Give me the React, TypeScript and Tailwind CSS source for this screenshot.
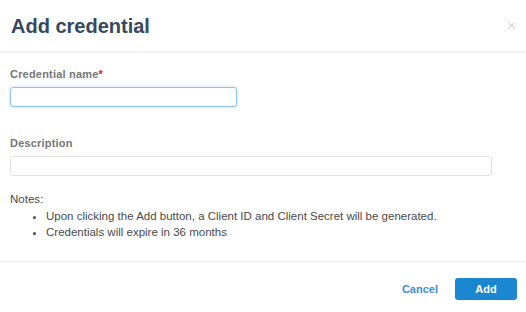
import { X } from "lucide-react";

export default function App() {
  return (
    <div className="w-[526px] h-[312px] bg-white flex flex-col font-['Liberation_Sans',Arial,sans-serif]">
      <div className="h-[53px] flex items-center justify-between pl-[11px] pr-[9px] border-b-2 border-[#f2f2f2]">
        <h2 className="text-[20px] font-bold text-[#34495e] leading-none">Add credential</h2>
        <X className="w-[11px] h-[11px] text-[#c4c4c4]" strokeWidth={2} />
      </div>

      <div className="flex-1 px-[10px] pt-[14px]">
        <label className="block text-[11px] leading-[14px] font-bold text-[#767676] tracking-[0.2px]">
          Credential name<span className="text-[#e02424]">*</span>
        </label>
        <input
          type="text"
          className="mt-[6px] block w-[227px] h-[20px] rounded-[3px] border border-[#8fc2ef] shadow-[0_0_3px_rgba(90,160,235,0.45)] outline-none"
        />

        <label className="mt-[29px] block text-[11px] leading-[14px] font-bold text-[#767676] tracking-[0.2px]">
          Description
        </label>
        <input
          type="text"
          className="mt-[6px] block w-[482px] h-[20px] rounded-[3px] border border-[#e2e2e2] outline-none"
        />

        <div className="mt-[15px] text-[11.5px] leading-[16.5px] text-[#4a4a4a]">
          <p>Notes:</p>
          <ul className="list-disc pl-[36px]">
            <li>Upon clicking the Add button, a Client ID and Client Secret will be generated.</li>
            <li>Credentials will expire in 36 months</li>
          </ul>
        </div>
      </div>

      <div className="h-[51px] border-t border-[#eeeeee] flex items-center justify-end gap-[17px] pr-[9px] pt-[4px]">
        <button className="text-[11px] font-bold text-[#3a8fd6]">Cancel</button>
        <button className="w-[62px] h-[22px] rounded-[3px] bg-[#1b87d1] text-white text-[11px] font-bold">
          Add
        </button>
      </div>
    </div>
  );
}
